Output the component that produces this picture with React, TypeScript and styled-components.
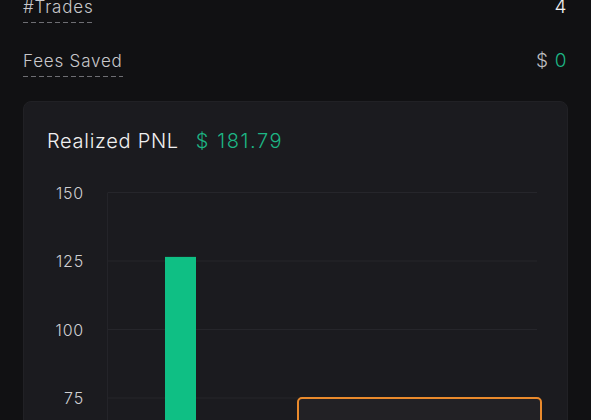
import React from "react";
import styled, { createGlobalStyle } from "styled-components";

const GlobalStyle = createGlobalStyle`
  html, body {
    margin: 0;
    padding: 0;
    background: #111113;
    overflow: hidden;
  }
  body {
    font-family: Inter, "Noto Sans", "Liberation Sans", sans-serif;
    font-weight: 300;
    color: #e6e6e6;
  }
`;

const ticks = [150, 125, 100, 75, 50, 25, 0];
const TOP = 39.5;
const STEP = 68.5;
const yFor = (v: number) => TOP + ((150 - v) / 25) * STEP;

const bars = [{ x: 141, value: 126.5 }];

const App: React.FC = () => {
  return (
    <>
      <GlobalStyle />
      <Page>
        <StatList>
          <StatRow>
            <StatLabel>#Trades</StatLabel>
            <StatValue>4</StatValue>
          </StatRow>
          <StatRow>
            <StatLabel>Fees Saved</StatLabel>
            <StatValue>
              <Muted>$</Muted> <Green>0</Green>
            </StatValue>
          </StatRow>
        </StatList>

        <Card>
          <CardHeader>
            <CardTitle>Realized PNL</CardTitle>
            <PnlValue>$ 181.79</PnlValue>
          </CardHeader>
          <ChartArea>
            <svg width="545" height="320" viewBox="0 0 545 320">
              <line x1="83.5" y1={TOP} x2="83.5" y2="320" stroke="#242429" strokeWidth="1" />
              {ticks.map((t) => (
                <g key={t}>
                  <line x1="84" y1={yFor(t)} x2="513" y2={yFor(t)} stroke="#26262b" strokeWidth="1" />
                  <text
                    x="60"
                    y={yFor(t) + 2}
                    textAnchor="end"
                    dominantBaseline="middle"
                    fill="#cfcfd2"
                    fontSize="16"
                    fontWeight="300"
                    letterSpacing="0.8"
                    fontFamily="Inter, 'Noto Sans', sans-serif"
                  >
                    {t}
                  </text>
                </g>
              ))}
              {bars.map((b) => (
                <rect key={b.x} x={b.x} y={yFor(b.value)} width="31" height={320 - yFor(b.value)} fill="#0fbf84" />
              ))}
            </svg>
            <Tooltip />
          </ChartArea>
        </Card>
      </Page>
    </>
  );
};

export default App;

const Page = styled.div`
  padding: 0 23px;
  height: 420px;
  overflow: hidden;
`;

const StatList = styled.div`
  margin-top: -6px;
  display: flex;
  flex-direction: column;
`;

const StatRow = styled.div`
  display: flex;
  justify-content: space-between;
  align-items: flex-start;
  height: 54px;
`;

const StatLabel = styled.span`
  font-size: 17px;
  line-height: 26px;
  letter-spacing: 0.8px;
  color: #c8c8cb;
  padding-bottom: 3px;
  background-image: linear-gradient(to right, #6e6e73 62%, transparent 62%);
  background-size: 8px 1px;
  background-repeat: repeat-x;
  background-position: left bottom;
`;

const StatValue = styled.span`
  font-size: 19px;
  line-height: 26px;
  letter-spacing: 0.6px;
  color: #f2f2f2;
  margin-right: 1px;
`;

const Muted = styled.span`
  color: #bdbdc0;
`;

const Green = styled.span`
  color: #1db584;
`;

const Card = styled.div`
  margin-top: -1px;
  background: #1b1b1f;
  border: 1px solid #212125;
  border-radius: 8px;
  height: 400px;
`;

const CardHeader = styled.div`
  display: flex;
  align-items: baseline;
  gap: 17px;
  padding: 27px 23px 0;
  height: 24px;
`;

const CardTitle = styled.span`
  font-size: 20px;
  font-weight: 350;
  line-height: 24px;
  letter-spacing: 0.7px;
  color: #f0f0f0;
`;

const PnlValue = styled.span`
  font-size: 20px;
  font-weight: 350;
  line-height: 24px;
  letter-spacing: 1.6px;
  color: #1db584;
`;

const ChartArea = styled.div`
  position: relative;
  svg {
    display: block;
  }
`;

const Tooltip = styled.div`
  position: absolute;
  left: 273px;
  top: 244px;
  width: 241px;
  height: 120px;
  border: 2.5px solid #ea8a2c;
  border-radius: 5px;
  background: #222125;
`;
